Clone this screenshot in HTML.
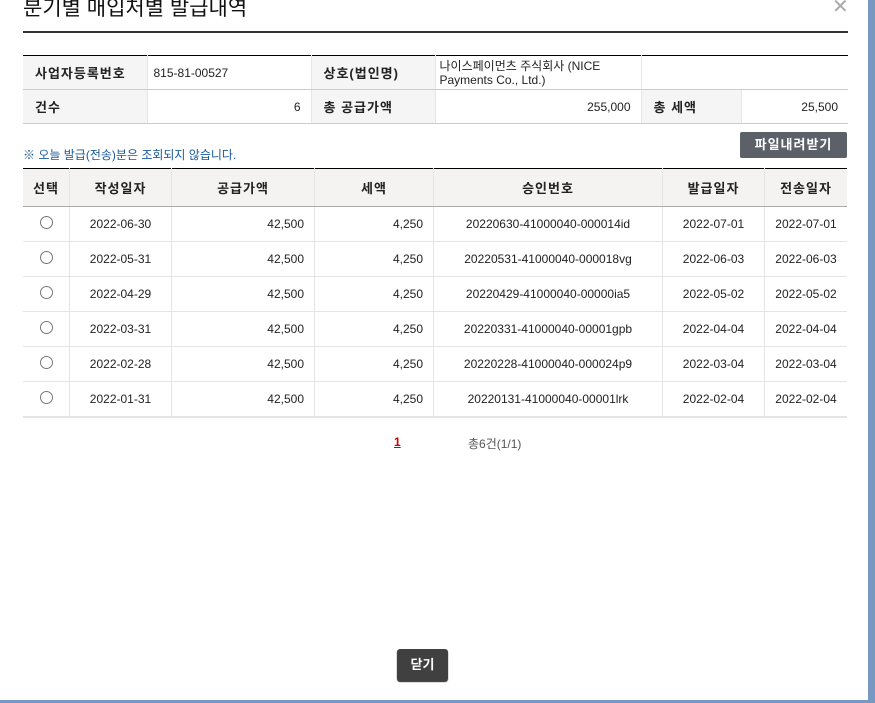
<!DOCTYPE html>
<html><head><meta charset="utf-8"><style>
body{margin:0;width:875px;height:703px;overflow:hidden;background:#fff;font-family:"Liberation Sans","Noto Sans CJK KR",sans-serif;position:relative;color:#222}
.rb{position:absolute;right:0;top:0;width:7px;height:703px;background:#7898c4}
.bb{position:absolute;left:0;bottom:0;width:875px;height:3px;background:#7898c4}
.title{position:absolute;left:23px;top:-8px;font-size:21px;color:#111}
.x{position:absolute;left:832px;top:-6px;font-size:20px;color:#aaa}
.rule{position:absolute;left:23px;top:31px;width:825px;height:2px;background:#333}
table{border-collapse:collapse;position:absolute;font-size:12px}
.info{left:23px;top:55px;width:825px;border-top:1px solid #000}
.info td{border-bottom:1px solid #ccc;border-right:1px solid #e6e6e6;height:34px;padding:0 6px;box-sizing:border-box}
.info td.l{background:#f5f5f5;font-weight:bold;font-size:13px;padding-left:12px;letter-spacing:1px}
.info td.r{text-align:right;padding-right:10px}
.note{position:absolute;left:23px;top:146px;font-size:12px;color:#1a5a9a}
.btn{position:absolute;left:740px;top:132px;width:107px;height:26px;background:#5c6068;border-radius:2px;color:#fff;font-weight:bold;font-size:13px;text-align:center;line-height:26px;letter-spacing:1px}
.main{left:23px;top:168px;width:824px;border-top:1px solid #000}
.main th{background:#f4f3f1;height:35px;font-size:13px;border-bottom:1px solid #aaa;border-right:1px solid #e4e4e4;color:#222;letter-spacing:1px}
.main td{height:35px;border-bottom:1px solid #e4e4e4;border-right:1px solid #e4e4e4;text-align:center;padding:0 10px;box-sizing:border-box}
.main td.r{text-align:right}
.main th:last-child,.main td:last-child{border-right:none}
.rad{display:inline-block;width:11px;height:11px;border:1px solid #777;border-radius:50%}
.pg{position:absolute;left:394px;top:435px;font-size:12px;color:#c00;font-weight:bold;text-decoration:underline}
.tot{position:absolute;left:468px;top:435px;font-size:12px;color:#555}
.close{position:absolute;left:397px;top:649px;width:51px;height:32px;background:#404040;border-radius:3px;color:#fff;font-weight:bold;font-size:13px;text-align:center;line-height:31px;box-shadow:0 1px 1px #222}
</style></head><body>
<div class="title">분기별 매입처별 발급내역</div>
<div class="x">✕</div>
<div class="rule"></div>
<table class="info">
<tr><td class="l" style="width:124px">사업자등록번호</td><td style="width:164px">815-81-00527</td><td class="l" style="width:124px">상호(법인명)</td><td style="width:206px;line-height:14px;padding-left:4px">나이스페이먼츠 주식회사 (NICE Payments Co., Ltd.)</td><td colspan="2" style="border-right:none"></td></tr>
<tr><td class="l">건수</td><td class="r">6</td><td class="l">총 공급가액</td><td class="r">255,000</td><td class="l" style="width:100px">총 세액</td><td class="r" style="border-right:none">25,500</td></tr>
</table>
<div class="note">※ 오늘 발급(전송)분은 조회되지 않습니다.</div>
<div class="btn">파일내려받기</div>
<table class="main">
<tr><th style="width:44px">선택</th><th style="width:99px">작성일자</th><th style="width:140px">공급가액</th><th style="width:116px">세액</th><th style="width:226px">승인번호</th><th style="width:99px">발급일자</th><th>전송일자</th></tr>
<tr><td><span class="rad"></span></td><td>2022-06-30</td><td class="r">42,500</td><td class="r">4,250</td><td>20220630-41000040-000014id</td><td>2022-07-01</td><td>2022-07-01</td></tr>
<tr><td><span class="rad"></span></td><td>2022-05-31</td><td class="r">42,500</td><td class="r">4,250</td><td>20220531-41000040-000018vg</td><td>2022-06-03</td><td>2022-06-03</td></tr>
<tr><td><span class="rad"></span></td><td>2022-04-29</td><td class="r">42,500</td><td class="r">4,250</td><td>20220429-41000040-00000ia5</td><td>2022-05-02</td><td>2022-05-02</td></tr>
<tr><td><span class="rad"></span></td><td>2022-03-31</td><td class="r">42,500</td><td class="r">4,250</td><td>20220331-41000040-00001gpb</td><td>2022-04-04</td><td>2022-04-04</td></tr>
<tr><td><span class="rad"></span></td><td>2022-02-28</td><td class="r">42,500</td><td class="r">4,250</td><td>20220228-41000040-000024p9</td><td>2022-03-04</td><td>2022-03-04</td></tr>
<tr><td style="border-bottom:2px solid #e4e4e4"><span class="rad"></span></td><td style="border-bottom:2px solid #e4e4e4">2022-01-31</td><td class="r" style="border-bottom:2px solid #e4e4e4">42,500</td><td class="r" style="border-bottom:2px solid #e4e4e4">4,250</td><td style="border-bottom:2px solid #e4e4e4">20220131-41000040-00001lrk</td><td style="border-bottom:2px solid #e4e4e4">2022-02-04</td><td style="border-bottom:2px solid #e4e4e4">2022-02-04</td></tr>
</table>
<div class="pg">1</div>
<div class="tot">총6건(1/1)</div>
<div class="close">닫기</div>
<div class="rb"></div><div class="bb"></div>
</body></html>
